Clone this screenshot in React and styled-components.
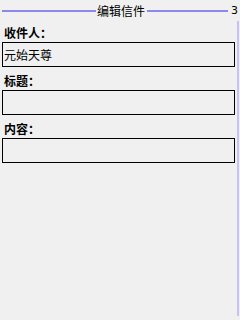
import React from "react";
import styled, { createGlobalStyle } from "styled-components";

const GlobalStyle = createGlobalStyle`
  html, body {
    margin: 0;
    padding: 0;
    background: #eff0ef;
  }
  * {
    box-sizing: border-box;
  }
`;

const Screen = styled.div`
  width: 240px;
  height: 320px;
  display: flex;
  flex-direction: column;
  background: #eff0ef;
  font-family: "Noto Sans CJK SC", "Liberation Sans", sans-serif;
  font-size: 12px;
  color: #000;
  overflow: hidden;
`;

const TitleBar = styled.div`
  height: 21px;
  display: flex;
  align-items: center;
  padding-left: 2px;
  padding-right: 2px;
`;

const Rule = styled.div`
  flex: ${(props) => props.grow};
  height: 2px;
  background: #8c88f0;
`;

const Title = styled.span`
  line-height: 14px;
  padding: 0 2px 0 1px;
  white-space: nowrap;
`;

const PageNum = styled.span`
  line-height: 14px;
  padding-left: 3px;
  font-family: "DejaVu Sans", sans-serif;
  font-size: 11px;
`;

const Body = styled.div`
  flex: 1;
  display: flex;
  padding-bottom: 4px;
`;

const Form = styled.div`
  flex: 1;
  display: flex;
  flex-direction: column;
  gap: 7px;
  padding: 5px 0 0 2px;
`;

const Field = styled.div`
  display: flex;
  flex-direction: column;
  gap: 2px;
`;

const Label = styled.div`
  font-weight: bold;
  line-height: 14px;
  padding-left: 2px;
`;

const Box = styled.div`
  width: 233px;
  height: 25px;
  border: 1px solid #000;
  display: flex;
  align-items: center;
  padding-left: 1px;
  line-height: 14px;
`;

const ScrollTrack = styled.div`
  width: 2px;
  margin-right: 1px;
  background: #c6c2f8;
`;

const fields = [
  { label: "收件人：", value: "元始天尊" },
  { label: "标题：", value: "" },
  { label: "内容：", value: "" },
];

export default function App() {
  return (
    <>
      <GlobalStyle />
      <Screen>
        <TitleBar>
          <Rule grow={94} />
          <Title>编辑信件</Title>
          <Rule grow={81} />
          <PageNum>3</PageNum>
        </TitleBar>
        <Body>
          <Form>
            {fields.map((f) => (
              <Field key={f.label}>
                <Label>{f.label}</Label>
                <Box>{f.value}</Box>
              </Field>
            ))}
          </Form>
          <ScrollTrack />
        </Body>
      </Screen>
    </>
  );
}
